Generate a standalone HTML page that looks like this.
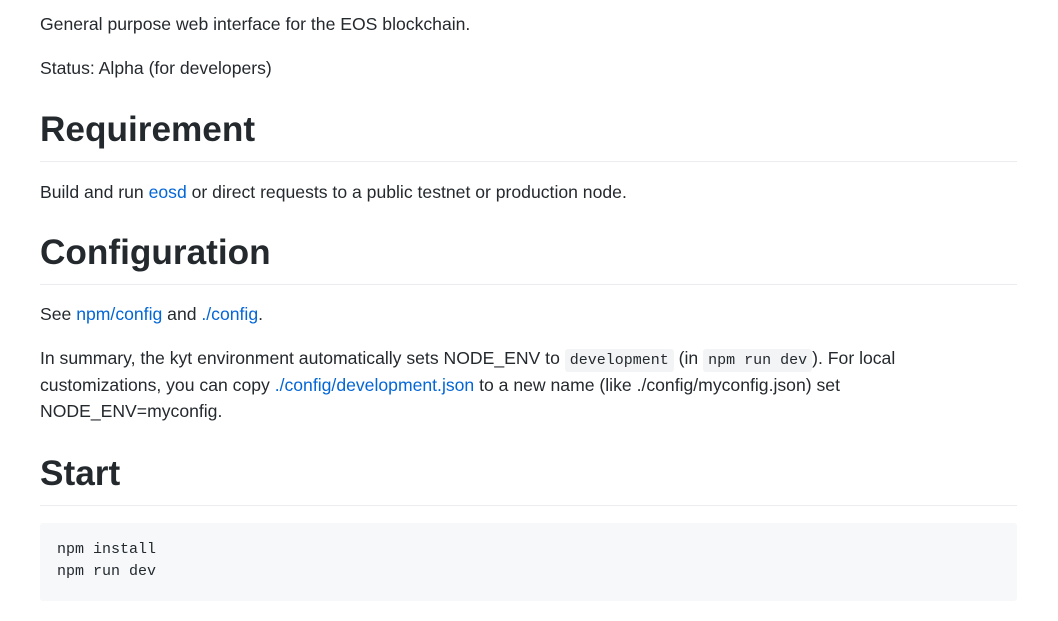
<!DOCTYPE html>
<html><head><meta charset="utf-8"><style>
html,body{margin:0;padding:0;background:#fff;}
body{width:1058px;height:621px;overflow:hidden;font-family:"Liberation Sans",sans-serif;color:#24292e;font-size:17.6px;}
.c{position:absolute;left:40px;width:977px;top:11px;}
p{margin:0 0 18px 0;line-height:26px;}
h1{font-size:35.2px;font-weight:bold;line-height:40px;margin:0;padding-bottom:11px;border-bottom:1px solid #eaecef;}
a{color:#0366d6;text-decoration:none;}
code{font-family:"Liberation Mono",monospace;font-size:15px;line-height:1;background:#f3f4f5;padding:3px 5px;border-radius:3px;}
pre{margin:0;background:#f6f8fa;padding:16px 17px;font-family:"Liberation Mono",monospace;font-size:15px;line-height:22px;border-radius:3px;height:46px;}
</style></head><body><div class="c">
<p>General purpose web interface for the EOS blockchain.</p>
<p style="margin-bottom:29px">Status: Alpha (for developers)</p>
<h1 style="margin-bottom:17px">Requirement</h1>
<p style="margin-bottom:28px">Build and run <a>eosd</a> or direct requests to a public testnet or production node.</p>
<h1 style="margin-bottom:16px">Configuration</h1>
<p>See <a>npm/config</a> and <a>./config</a>.</p>
<p style="margin-bottom:31px;height:78px;line-height:26.5px">In summary, the kyt environment automatically sets NODE_ENV to <code>development</code> (in <code>npm run dev</code>). For local customizations, you can copy <a>./config/development.json</a> to a new name (like ./config/myconfig.json) set NODE_ENV=myconfig.</p>
<h1 style="margin-bottom:17px">Start</h1>
<pre>npm install
npm run dev</pre>
</div></body></html>
